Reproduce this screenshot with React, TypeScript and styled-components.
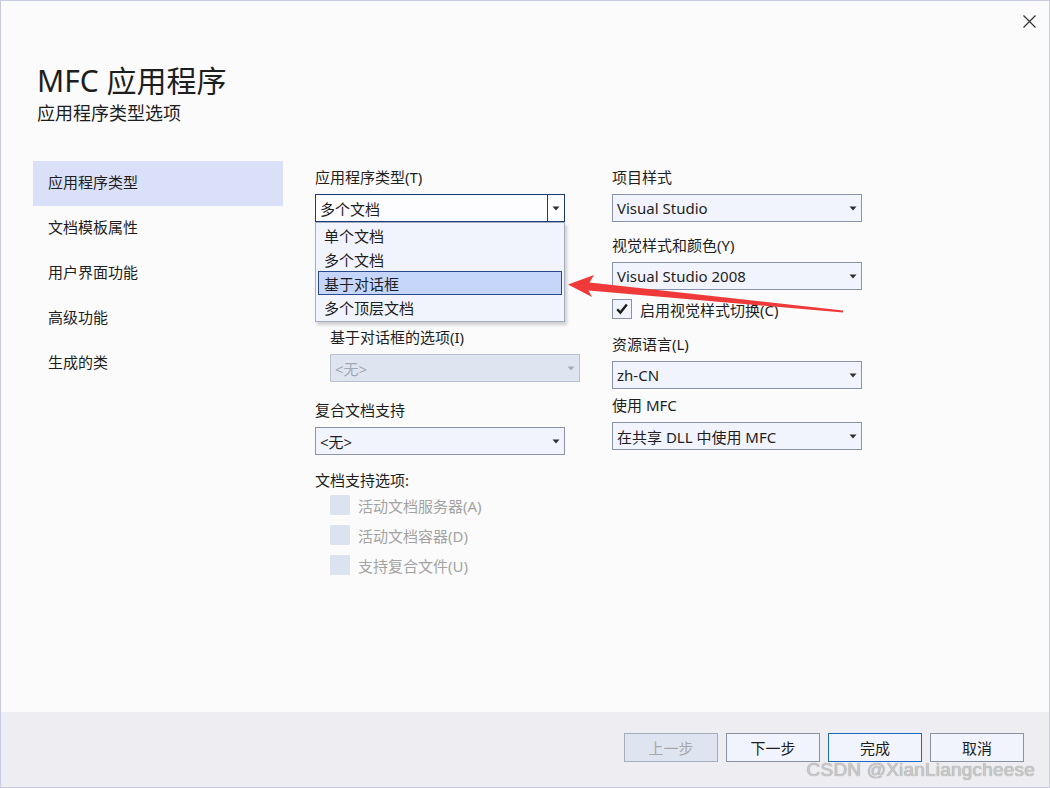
import React from 'react'
import styled, { createGlobalStyle, css } from 'styled-components'

const uiFont = `"Noto Sans", "Noto Sans CJK SC", sans-serif`

const GlobalStyle = createGlobalStyle`
  html, body {
    margin: 0;
    padding: 0;
    background: #fbfbfb;
  }
  body {
    font-family: ${uiFont};
    color: #1e1e1e;
  }
  * {
    box-sizing: border-box;
  }
`

const navItems = ['应用程序类型', '文档模板属性', '用户界面功能', '高级功能', '生成的类']
const appTypes = ['单个文档', '多个文档', '基于对话框', '多个顶层文档']

function Arrow(props: { disabled?: boolean }) {
  return (
    <svg width="8" height="5" viewBox="0 0 8 5">
      <path d="M0.5 0.5 H7.5 L4 4.5 Z" fill={props.disabled ? '#a3abbb' : '#303030'} />
    </svg>
  )
}

function Combo(props: { value: string; focused?: boolean; disabled?: boolean; children?: React.ReactNode }) {
  return (
    <ComboBox $focused={props.focused} $disabled={props.disabled}>
      <span className="value">{props.value}</span>
      <span className="button">
        <Arrow disabled={props.disabled} />
      </span>
      {props.children}
    </ComboBox>
  )
}

function Check(props: { checked?: boolean; disabled?: boolean; label: string }) {
  return (
    <CheckRow $disabled={props.disabled}>
      <CheckBox $disabled={props.disabled}>
        {props.checked && (
          <svg width="14" height="14" viewBox="0 0 14 14">
            <path d="M2.2 7.2 L5.4 10.6 L11.8 2.6" fill="none" stroke="#1e1e1e" strokeWidth="2.4" />
          </svg>
        )}
      </CheckBox>
      <span>{props.label}</span>
    </CheckRow>
  )
}

export default function App() {
  return (
    <>
      <GlobalStyle />
      <Window>
        <TopBar>
          <CloseButton>
            <svg width="13" height="13" viewBox="0 0 13 13">
              <path d="M0.5 0.5 L12.5 12.5 M12.5 0.5 L0.5 12.5" stroke="#333" strokeWidth="1.2" />
            </svg>
          </CloseButton>
        </TopBar>
        <Header>
          <Title>MFC 应用程序</Title>
          <Subtitle>应用程序类型选项</Subtitle>
        </Header>
        <Body>
          <Sidebar>
            {navItems.map((item, i) => (
              <NavItem key={item} $active={i === 0}>{item}</NavItem>
            ))}
          </Sidebar>
          <Columns>
            <Column $width={297}>
              <Label>应用程序类型(T)</Label>
              <Combo value="多个文档" focused>
                <DropList>
                  {appTypes.map((t) => (
                    <DropItem key={t} $selected={t === '基于对话框'}>{t}</DropItem>
                  ))}
                </DropList>
              </Combo>
              <SubGroup>
                <Label>基于对话框的选项(I)</Label>
                <Combo value="<无>" disabled />
              </SubGroup>
              <Label $top={18}>复合文档支持</Label>
              <Combo value="<无>" />
              <Label $top={15}>文档支持选项:</Label>
              <CheckList>
                <Check disabled label="活动文档服务器(A)" />
                <Check disabled label="活动文档容器(D)" />
                <Check disabled label="支持复合文件(U)" />
              </CheckList>
            </Column>
            <Column $width={250}>
              <Label>项目样式</Label>
              <Combo value="Visual Studio" />
              <Label $top={13}>视觉样式和颜色(Y)</Label>
              <Combo value="Visual Studio 2008" />
              <SingleCheck>
                <Check checked label="启用视觉样式切换(C)" />
              </SingleCheck>
              <Label $top={10}>资源语言(L)</Label>
              <Combo value="zh-CN" />
              <Label $top={6}>使用 MFC</Label>
              <Combo value="在共享 DLL 中使用 MFC" />
            </Column>
          </Columns>
        </Body>
        <Footer>
          <Button disabled>上一步</Button>
          <Button>下一步</Button>
          <Button $primary>完成</Button>
          <Button>取消</Button>
        </Footer>
        <Watermark>CSDN @XianLiangcheese</Watermark>
        <Pointer width="290" height="50" viewBox="0 0 290 50">
          <path d="M8 13.5 L34 4 L29.5 11.5 L283 39.5 L283 41.5 L28.5 19.5 L32 26 Z" fill="#f03a3a" />
        </Pointer>
      </Window>
    </>
  )
}

const Window = styled.div`
  position: relative;
  display: flex;
  flex-direction: column;
  width: 1050px;
  height: 788px;
  border: 1px solid #c8cbe0;
  background: #fbfbfb;
  overflow: hidden;
`

const TopBar = styled.div`
  display: flex;
  justify-content: flex-end;
  height: 40px;
  padding: 5px 5px 0 0;
`

const CloseButton = styled.div`
  display: flex;
  align-items: center;
  justify-content: center;
  width: 30px;
  height: 30px;
`

const Header = styled.div`
  padding: 22px 0 36px 36px;
`

const Title = styled.h1`
  margin: 0;
  font-size: 30px;
  font-weight: 400;
  line-height: 36px;
  color: #1e1e1e;
`

const Subtitle = styled.div`
  margin-top: 2px;
  font-size: 18px;
  line-height: 24px;
  color: #1e1e1e;
`

const Body = styled.div`
  display: flex;
  gap: 32px;
  padding-left: 32px;
`

const Sidebar = styled.nav`
  display: flex;
  flex-direction: column;
  width: 250px;
`

const NavItem = styled.div<{ $active?: boolean }>`
  height: 45px;
  display: flex;
  align-items: center;
  padding: 0 0 4px 15px;
  font-size: 15px;
  ${(p) => p.$active && css`background: #dae0f7;`}
`

const Columns = styled.div`
  display: flex;
`

const Column = styled.div<{ $width: number }>`
  display: flex;
  flex-direction: column;
  width: ${(p) => p.$width}px;
  padding-top: 6px;
`

const Label = styled.div<{ $top?: number }>`
  font-size: 15px;
  line-height: 20px;
  margin-top: ${(p) => p.$top || 0}px;
  margin-bottom: 7px;
`

const ComboBox = styled.div<{ $focused?: boolean; $disabled?: boolean }>`
  position: relative;
  display: flex;
  align-items: center;
  width: 250px;
  height: 28px;
  border: 1px solid #8a93ab;
  background: #f1f4fc;
  font-size: 15px;
  .value {
    flex: 1;
    padding-left: 4px;
    white-space: nowrap;
  }
  .button {
    display: flex;
    align-items: center;
    justify-content: center;
    width: 17px;
    height: 100%;
  }
  ${(p) => p.$focused && css`
    border-color: #1d3a78;
    background: #fdfdff;
    .button {
      border-left: 1px solid #1d3a78;
    }
  `}
  ${(p) => p.$disabled && css`
    border-color: #b8c0d2;
    background: #dfe5f0;
    color: #a2a9b5;
  `}
`

const DropList = styled.div`
  position: absolute;
  left: -1px;
  top: calc(100% + 1px);
  z-index: 5;
  width: 250px;
  padding: 0 0 2px;
  border: 1px solid #a5adc4;
  background: #f1f4fd;
  box-shadow: 2px 3px 3px rgba(0, 0, 0, 0.18);
`

const DropItem = styled.div<{ $selected?: boolean }>`
  height: 24px;
  margin: 0 2px;
  padding-left: 5px;
  display: flex;
  align-items: center;
  font-size: 15px;
  border: 1px solid transparent;
  ${(p) => p.$selected && css`
    background: #c5d6fa;
    border-color: #2b4a8c;
  `}
`

const SubGroup = styled.div`
  display: flex;
  flex-direction: column;
  margin-top: 105px;
  padding-left: 15px;
`

const CheckList = styled.div`
  display: flex;
  flex-direction: column;
  padding-left: 15px;
  margin-top: -7px;
`

const SingleCheck = styled.div`
  margin-top: 4px;
`

const CheckRow = styled.div<{ $disabled?: boolean }>`
  display: flex;
  align-items: center;
  gap: 8px;
  height: 30px;
  font-size: 15px;
  color: ${(p) => (p.$disabled ? '#a3a3a3' : '#1e1e1e')};
`

const CheckBox = styled.div<{ $disabled?: boolean }>`
  display: flex;
  align-items: center;
  justify-content: center;
  width: 20px;
  height: 20px;
  border: 1px solid ${(p) => (p.$disabled ? '#dde4f0' : '#8a93ab')};
  background: ${(p) => (p.$disabled ? '#dce3f0' : '#f1f4fc')};
`

const Footer = styled.div`
  display: flex;
  justify-content: flex-end;
  gap: 8px;
  margin-top: auto;
  height: 75px;
  padding: 21px 25px 0 0;
  background: #eeeef2;
`

const Button = styled.button<{ $primary?: boolean }>`
  width: 94px;
  height: 29px;
  border: 1px solid ${(p) => (p.$primary ? '#1a6ac0' : '#8a92a4')};
  background: #f1f4fc;
  font-family: ${uiFont};
  font-size: 15px;
  color: #1e1e1e;
  padding: 0;
  &:disabled {
    border-color: #a5adbd;
    background: #dfe5f0;
    color: #a8a8a8;
  }
`

const Watermark = styled.div`
  position: absolute;
  right: 14px;
  bottom: 6px;
  font-family: "Liberation Sans", Arial, sans-serif;
  font-size: 19px;
  color: #c9c9c9;
  text-shadow: 0 0 1px #8a8a8a;
  letter-spacing: 0.2px;
`

const Pointer = styled.svg`
  position: absolute;
  left: 559px;
  top: 270px;
  z-index: 10;
`
